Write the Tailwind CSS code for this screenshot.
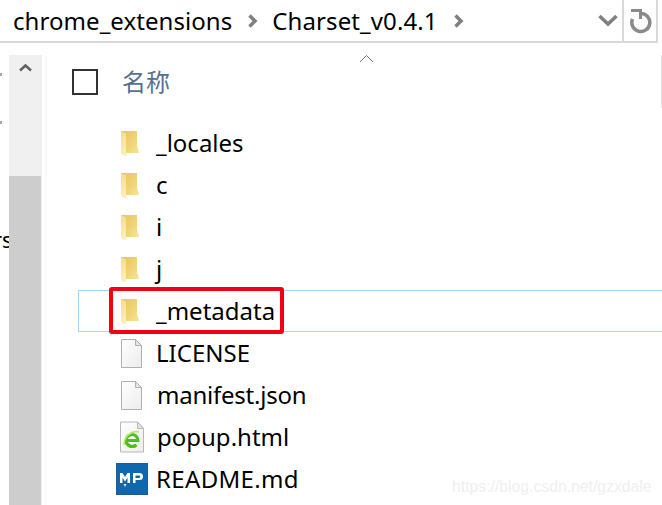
<!DOCTYPE html>
<html><head><meta charset="utf-8"><script src="https://cdn.jsdelivr.net/npm/@tailwindcss/browser@4"></script></head>
<body class="bg-white overflow-hidden">
<svg class="absolute w-0 h-0"><defs>
  <linearGradient id="fb" x1="0" y1="0" x2="1" y2="1"><stop offset="0" stop-color="#e6c25c"/><stop offset=".6" stop-color="#f2d67c"/><stop offset="1" stop-color="#f8e6a0"/></linearGradient>
  <linearGradient id="ff" x1="0" y1="0" x2="0" y2="1"><stop offset="0" stop-color="#f6dc8c"/><stop offset="1" stop-color="#fdf0c0"/></linearGradient>
  <linearGradient id="fd" x1="0" y1="0" x2="1" y2="1"><stop offset="0" stop-color="#ffffff"/><stop offset="1" stop-color="#ececec"/></linearGradient>
</defs></svg>
<div class="relative w-[662px] h-[505px] overflow-hidden bg-white flex flex-col font-['Noto_Sans','Noto_Sans_CJK_SC',sans-serif] text-[24px] text-black">
  <!-- address bar -->
  <div class="h-[43px] w-[658px] shrink-0 flex items-center border-b-2 border-r-2 border-[#d9d9d9]">
    <span class="ml-[13px] leading-none tracking-[0.06px]">chrome_extensions</span>
    <svg class="ml-[15px]" width="11" height="14" viewBox="0 0 11 14"><path d="M2.500 1.500 8 7l-5.500 5.500" fill="none" stroke="#808080" stroke-width="3.500"/></svg>
    <span class="ml-[14px] leading-none tracking-[0.1px]">Charset_v0.4.1</span>
    <svg class="ml-[15px]" width="11" height="14" viewBox="0 0 11 14"><path d="M2.500 1.500 8 7l-5.500 5.500" fill="none" stroke="#808080" stroke-width="3.500"/></svg>
    <svg class="ml-auto" width="20" height="13" viewBox="0 0 20 13"><path d="M1.500 2 10 10 18.500 2" fill="none" stroke="#808080" stroke-width="3.500"/></svg>
    <div class="ml-[4px] w-[34px] h-full border-l-2 border-[#d9d9d9] flex items-center justify-center pl-[2px]">
      <svg width="24" height="26" viewBox="0 0 24 26"><path d="M11.500 5.500A9 9 0 1 1 3.500 11" fill="none" stroke="#8a8a8a" stroke-width="3.500"/><path d="M2 1h11v10h-3V4H2z" fill="#8a8a8a"/></svg>
    </div>
  </div>
  <div class="flex flex-1 min-h-0">
    <!-- left edge of the neighbouring pane -->
    <div class="relative w-[9px] shrink-0 overflow-hidden">
      <span class="absolute left-0 top-[30px] w-[2px] h-[3px] bg-[#a8a8a8]"></span>
      <span class="absolute left-0 top-[78px] w-[2px] h-[3px] bg-[#a8a8a8]"></span>
      <span class="absolute left-[-7px] top-[178px] leading-[36px] text-[22px]">rs</span>
    </div>
    <!-- pane scrollbar -->
    <div class="w-[33px] shrink-0 mt-[12px] flex flex-col bg-[#f0f0f0]">
      <div class="h-[121px] flex justify-center pt-[8px]">
        <svg width="13" height="9" viewBox="0 0 13 9"><path d="M1 7.500 6.500 2.500 12 7.500" fill="none" stroke="#606060" stroke-width="2.500"/></svg>
      </div>
      <div class="flex-1 w-[32px] bg-[#cdcdcd]"></div>
    </div>
    <div class="w-[2px] ml-[3px] mt-[12px] bg-[#f8f8f8] shrink-0"></div>
    <!-- file list -->
    <div class="relative flex-1 min-w-0 flex flex-col">
      <svg class="absolute left-[312px] top-[11px]" width="15" height="9" viewBox="0 0 15 9"><path d="M1 8 7.500 1.500 14 8" fill="none" stroke="#777" stroke-width="1"/></svg>
      <div class="h-[79px] shrink-0 flex items-center pl-[25px] pb-[2px]">
        <span class="w-[26px] h-[26px] border-2 border-[#333]"></span>
        <span class="ml-[24px] text-[#57708f] text-[24px] leading-none">名称</span>
      </div>
      <div class="flex flex-col pl-[31px]">
        <div class="h-[42px] flex items-center pl-[42px]">
          <svg class="mr-[16px] shrink-0" width="20" height="27" viewBox="0 0 20 27"><path d="M1 1h16v15l2 6.500v.5H6v3l-5-2z" fill="url(#fb)"/><path d="M1 1l5 2.500V26.500l-5-2z" fill="url(#ff)"/></svg>
          <span>_locales</span>
        </div>
        <div class="h-[42px] flex items-center pl-[42px]">
          <svg class="mr-[16px] shrink-0" width="20" height="27" viewBox="0 0 20 27"><path d="M1 1h16v15l2 6.500v.5H6v3l-5-2z" fill="url(#fb)"/><path d="M1 1l5 2.500V26.500l-5-2z" fill="url(#ff)"/></svg>
          <span>c</span>
        </div>
        <div class="h-[42px] flex items-center pl-[42px]">
          <svg class="mr-[16px] shrink-0" width="20" height="27" viewBox="0 0 20 27"><path d="M1 1h16v15l2 6.500v.5H6v3l-5-2z" fill="url(#fb)"/><path d="M1 1l5 2.500V26.500l-5-2z" fill="url(#ff)"/></svg>
          <span>i</span>
        </div>
        <div class="h-[42px] flex items-center pl-[42px]">
          <svg class="mr-[16px] shrink-0" width="20" height="27" viewBox="0 0 20 27"><path d="M1 1h16v15l2 6.500v.5H6v3l-5-2z" fill="url(#fb)"/><path d="M1 1l5 2.500V26.500l-5-2z" fill="url(#ff)"/></svg>
          <span>j</span>
        </div>
        <div class="h-[42px] flex items-center pl-[41px] border border-r-0 border-[#a6d5f5]">
          <svg class="mr-[16px] shrink-0" width="20" height="27" viewBox="0 0 20 27"><path d="M1 1h16v15l2 6.500v.5H6v3l-5-2z" fill="url(#fb)"/><path d="M1 1l5 2.500V26.500l-5-2z" fill="url(#ff)"/></svg>
          <span>_metadata</span>
        </div>
        <div class="h-[42px] flex items-center pl-[42px]">
          <svg class="mr-[13px] shrink-0" width="23" height="29" viewBox="0 0 23 29"><path d="M1.500.5h14l6 6v22h-20z" fill="url(#fd)" stroke="#b0b0b0"/><path d="M15.500.5v6h6z" fill="#e4e4e4" stroke="#b0b0b0"/></svg>
          <span>LICENSE</span>
        </div>
        <div class="h-[42px] flex items-center pl-[42px]">
          <svg class="mr-[14px] shrink-0" width="23" height="29" viewBox="0 0 23 29"><path d="M1.500.5h14l6 6v22h-20z" fill="url(#fd)" stroke="#b0b0b0"/><path d="M15.500.5v6h6z" fill="#e4e4e4" stroke="#b0b0b0"/></svg>
          <span class="tracking-[-0.23px]">manifest.json</span>
        </div>
        <div class="h-[42px] flex items-center pl-[41px]">
          <svg class="mr-[12px] shrink-0" width="26" height="32" viewBox="0 0 26 32"><path d="M1.500 1h17l6 6.500V31h-23z" fill="url(#fd)" stroke="#b8b8b8"/><path d="M18.500 1v6.500h6z" fill="#e4e4e4" stroke="#b8b8b8"/><path d="M7.500 19.500h11.500a6 6 0 1 0-2 4.500" fill="none" stroke="#4fbf1f" stroke-width="3"/><path d="M7 20a6.500 6.500 0 0 0 10.500 4" fill="none" stroke="#4fbf1f" stroke-width="3"/><path d="M5 24C5 16 12 9 20 11" fill="none" stroke="#b7e86a" stroke-width="1.500"/></svg>
          <span>popup.html</span>
        </div>
        <div class="h-[42px] flex items-center pl-[38px]">
          <svg class="mr-[8px] shrink-0" width="32" height="32" viewBox="0 0 32 32"><rect x=".5" y=".5" width="31" height="31" fill="#0f68ad" stroke="#1d5d92"/><path d="M4 20v-10h2.500l2.500 4 2.500-4H14v10h-2.500v-5.500L9 18.500l-2.500-4V20z" fill="#fff"/><path d="M7.500 21h3L9 24z" fill="#d8e8f4"/><path d="M17 20V10h6.500a3.500 3.500 0 0 1 0 7H19.500v3zM19.500 12.500v2.500h3.500a1.250 1.250 0 0 0 0-2.500z" fill="#fff" fill-rule="evenodd"/></svg>
          <span class="tracking-[0.34px]">README.md</span>
        </div>
      </div>
      <div class="absolute right-0 top-[12px] w-px h-[53px] bg-[#e5e5e5]"></div>
    </div>
  </div>
  <!-- annotation + watermark over the content -->
  <div class="absolute left-[109px] top-[287px] w-[175px] h-[47px] rounded-[3px] border-[4px] border-[#f40012]"></div>
  <span class="absolute left-[452px] top-[477px] text-[15.750px] leading-[20px] text-[#efefef] font-['Liberation_Sans',sans-serif]">https://blog.csdn.net/gzxdale</span>
</div>
</body></html>
